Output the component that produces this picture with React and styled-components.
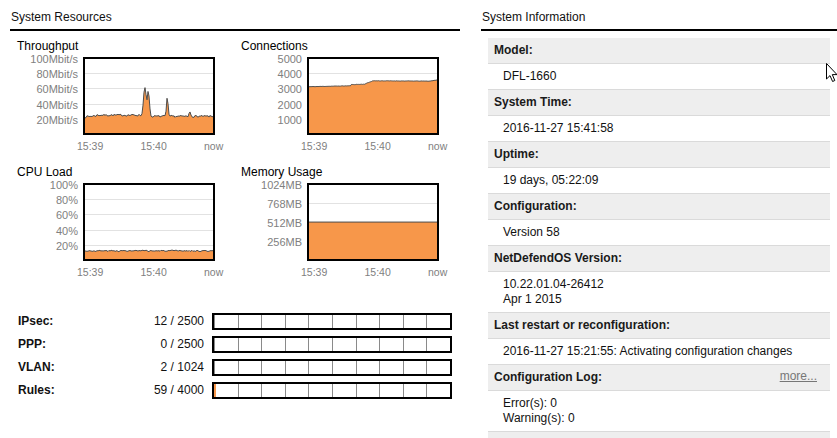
import React from 'react';
import styled, { createGlobalStyle } from 'styled-components';

const GlobalStyle = createGlobalStyle`
  html, body { margin: 0; padding: 0; background: #fff; }
  body {
    font-family: "Liberation Sans", Arial, sans-serif;
    font-size: 12px;
    color: #111;
  }
`;

/* ---------- sample data ---------- */

function rng(seed) {
  let a = seed;
  return () => {
    a |= 0; a = (a + 0x6d2b79f5) | 0;
    let t = Math.imul(a ^ (a >>> 15), 1 | a);
    t = (t + Math.imul(t ^ (t >>> 7), 61 | t)) ^ t;
    return ((t ^ (t >>> 14)) >>> 0) / 4294967296;
  };
}

const throughputSpikes = { 57: 27, 58: 38, 59: 55, 60: 61, 61: 52, 62: 45, 63: 56, 64: 50, 65: 33, 81: 30, 82: 47, 83: 40, 84: 26, 104: 27, 105: 29, 106: 25 };
const throughput = (() => {
  const r = rng(7);
  return Array.from({ length: 129 }, (_, i) => {
    if (throughputSpikes[i] !== undefined) return throughputSpikes[i];
    const base = i < 12 ? 22.5 + i * 0.15 : i < 57 ? 24.8 : 23.2;
    return base + (r() - 0.5) * 2.6;
  });
})();

const connections = (() => {
  const r = rng(11);
  return Array.from({ length: 128 }, (_, i) => {
    let v;
    if (i < 42) v = 3110 + i * 1.5;
    else if (i < 55) v = 3250 + (i - 42) * 2;
    else if (i < 64) v = 3280 + (i - 55) * 26;
    else if (i < 120) v = 3500 - (i - 64) * 0.4;
    else v = 3480 + (i - 120) * 11;
    return v + (r() - 0.5) * 20;
  });
})();

const cpu = (() => {
  const r = rng(3);
  return Array.from({ length: 129 }, () => 12 + (r() - 0.5) * 1.8);
})();

const memory = Array.from({ length: 129 }, () => 511);

const charts = [
  {
    title: 'Throughput', max: 100, data: throughput,
    ticks: [100, 80, 60, 40, 20].map((v) => ({ v, label: `${v}Mbit/s` })),
  },
  {
    title: 'Connections', max: 5000, data: connections,
    ticks: [5000, 4000, 3000, 2000, 1000].map((v) => ({ v, label: `${v}` })),
  },
  {
    title: 'CPU Load', max: 100, data: cpu,
    ticks: [100, 80, 60, 40, 20].map((v) => ({ v, label: `${v}%` })),
  },
  {
    title: 'Memory Usage', max: 1024, data: memory,
    ticks: [1024, 768, 512, 256].map((v) => ({ v, label: `${v}MB` })),
  },
];

const usage = [
  { name: 'IPsec:', used: 12, total: 2500 },
  { name: 'PPP:', used: 0, total: 2500 },
  { name: 'VLAN:', used: 2, total: 1024 },
  { name: 'Rules:', used: 59, total: 4000 },
];

const info = [
  { head: 'Model:', lines: ['DFL-1660'] },
  { head: 'System Time:', lines: ['2016-11-27 15:41:58'] },
  { head: 'Uptime:', lines: ['19 days, 05:22:09'] },
  { head: 'Configuration:', lines: ['Version 58'] },
  { head: 'NetDefendOS Version:', lines: ['10.22.01.04-26412', 'Apr 1 2015'] },
  { head: 'Last restart or reconfiguration:', lines: ['2016-11-27 15:21:55: Activating configuration changes'] },
  { head: 'Configuration Log:', more: true, lines: ['Error(s): 0', 'Warning(s): 0'] },
];

/* ---------- layout ---------- */

const Page = styled.div`
  position: relative;
  display: flex;
  align-items: flex-start;
  width: 837px;
  height: 438px;
  overflow: hidden;
`;

const Panel = styled.section`
  flex: none;
  width: ${(p) => p.$width}px;
  margin-left: ${(p) => p.$offset}px;
`;

const PanelTitle = styled.h2`
  margin: 0;
  padding: 9px 0 4px 1px;
  font-size: 12px;
  font-weight: normal;
  line-height: 16px;
  color: #111;
  border-bottom: 2px solid #000;
`;

/* ---------- charts ---------- */

const ChartGrid = styled.div`
  display: grid;
  grid-template-columns: 224px 224px;
  row-gap: 12px;
  margin-top: 8px;
`;

const ChartCell = styled.div``;

const ChartTitle = styled.div`
  padding-left: 7px;
  margin-bottom: 4px;
  font-size: 12px;
  line-height: 14px;
  color: #000;
`;

const PlotRow = styled.div`
  display: flex;
`;

const YAxis = styled.div`
  position: relative;
  flex: none;
  width: 73px;
  height: 78px;
`;

const YTick = styled.span`
  position: absolute;
  right: 5px;
  transform: translateY(-50%);
  font-size: 11px;
  line-height: 12px;
  color: #808080;
  white-space: nowrap;
`;

const Plot = styled.svg`
  display: block;
  flex: none;
  width: 132px;
  height: 78px;
`;

const XAxis = styled.div`
  display: flex;
  margin-top: 4px;
  padding-left: 67px;
  font-size: 10.5px;
  line-height: 14px;
  color: #808080;
`;

const XTick = styled.span`
  flex: none;
  width: 63.5px;
`;

const PLOT_W = 132;
const PLOT_H = 78;

function Chart({ title, max, data, ticks }) {
  const yOf = (v) => 1 + (1 - v / max) * (PLOT_H - 2);
  const step = (PLOT_W - 4) / (data.length - 1);
  const pts = data.map((v, i) => `${(2 + i * step).toFixed(2)},${yOf(v).toFixed(2)}`);
  const area = `M2,${PLOT_H - 1} L${pts.join(' L')} L${PLOT_W - 2},${PLOT_H - 1} Z`;

  return (
    <ChartCell>
      <ChartTitle>{title}</ChartTitle>
      <PlotRow>
        <YAxis>
          {ticks.map((t) => (
            <YTick key={t.label} style={{ top: yOf(t.v) + 1 }}>{t.label}</YTick>
          ))}
        </YAxis>
        <Plot viewBox={`0 0 ${PLOT_W} ${PLOT_H}`}>
          <rect x="0" y="0" width={PLOT_W} height={PLOT_H} fill="#fff" />
          {ticks.slice(1).map((t) => (
            <line key={t.v} x1="1" x2={PLOT_W - 1} y1={Math.round(yOf(t.v)) + 0.5} y2={Math.round(yOf(t.v)) + 0.5} stroke="#e2e2e2" strokeWidth="1" />
          ))}
          <path d={area} fill="#f7974a" />
          <polyline points={pts.join(' ')} fill="none" stroke="#4d4d4d" strokeWidth="1" />
          <rect x="1" y="1" width={PLOT_W - 2} height={PLOT_H - 2} fill="none" stroke="#000" strokeWidth="2" />
        </Plot>
      </PlotRow>
      <XAxis>
        <XTick>15:39</XTick>
        <XTick>15:40</XTick>
        <XTick>now</XTick>
      </XAxis>
    </ChartCell>
  );
}

/* ---------- usage meters ---------- */

const UsageGrid = styled.div`
  display: grid;
  grid-template-columns: 112px 66px 240px;
  column-gap: 8px;
  row-gap: 6px;
  align-items: center;
  margin: 34px 0 0 8px;
`;

const UsageLabel = styled.div`
  font-weight: bold;
  line-height: 17px;
  color: #111;
`;

const UsageValue = styled.div`
  text-align: right;
  line-height: 17px;
  color: #111;
  white-space: nowrap;
`;

const Meter = styled.div`
  position: relative;
  box-sizing: border-box;
  height: 17px;
  border: 2px solid #000;
  display: grid;
  grid-template-columns: repeat(10, 1fr);
`;

const MeterCell = styled.div`
  border-left: 1px solid #8a8a8a;
  &:first-child { border-left: none; }
`;

const MeterFill = styled.div`
  position: absolute;
  left: 0;
  top: 0;
  bottom: 0;
  background: #f7974a;
`;

/* ---------- system information ---------- */

const InfoList = styled.dl`
  margin: 7px 0 0 7px;
  width: 342px;
`;

const InfoHead = styled.dt`
  display: flex;
  justify-content: space-between;
  align-items: center;
  padding: 5px 13px 5px 6px;
  line-height: 15px;
  font-weight: bold;
  color: #1a1a1a;
  background: #eeeeee;
  border-bottom: 1px solid #dadada;
  min-height: 15px;
`;

const InfoValue = styled.dd`
  margin: 0;
  padding: 5px 0 5px 15px;
  line-height: 15px;
  color: #111;
  border-bottom: 1px solid #dadada;
`;

const InfoLine = styled.div``;

const MoreLink = styled.a`
  font-weight: normal;
  color: #777;
  text-decoration: underline;
  margin-top: -3px;
`;

const Pointer = styled.svg`
  position: absolute;
  left: 826px;
  top: 63px;
  width: 12px;
  height: 19px;
`;

export default function App() {
  return (
    <Page>
      <GlobalStyle />
      <Panel $offset={10} $width={450}>
        <PanelTitle>System Resources</PanelTitle>
        <ChartGrid>
          {charts.map((c) => <Chart key={c.title} {...c} />)}
        </ChartGrid>
        <UsageGrid>
          {usage.map((u) => (
            <React.Fragment key={u.name}>
              <UsageLabel>{u.name}</UsageLabel>
              <UsageValue>{u.used} / {u.total}</UsageValue>
              <Meter>
                <MeterFill style={{ width: `${Math.floor((u.used / u.total) * 100)}%` }} />
                {Array.from({ length: 10 }, (_, i) => <MeterCell key={i} />)}
              </Meter>
            </React.Fragment>
          ))}
        </UsageGrid>
      </Panel>
      <Panel $offset={21} $width={356}>
        <PanelTitle>System Information</PanelTitle>
        <InfoList>
          {info.map((row) => (
            <React.Fragment key={row.head}>
              <InfoHead>
                <span>{row.head}</span>
                {row.more && <MoreLink href="#">more...</MoreLink>}
              </InfoHead>
              <InfoValue>
                {row.lines.map((l) => <InfoLine key={l}>{l}</InfoLine>)}
              </InfoValue>
            </React.Fragment>
          ))}
          <InfoHead>{'\u00a0'}</InfoHead>
        </InfoList>
      </Panel>
      <Pointer viewBox="0 0 12 19">
        <path d="M0.5 0.5 L0.5 16 L4 12.6 L6.6 18.5 L8.8 17.5 L6.3 11.6 L11 11.6 Z" fill="#fff" stroke="#000" strokeWidth="1" strokeLinejoin="miter" />
      </Pointer>
    </Page>
  );
}
